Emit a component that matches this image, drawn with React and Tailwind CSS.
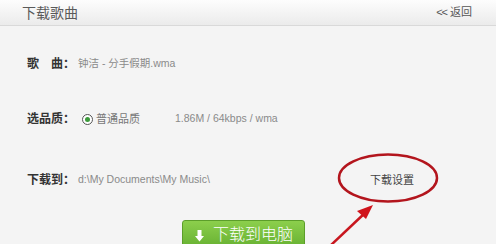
import React from "react";

export default function App() {
  return (
    <div className="relative w-[496px] h-[244px] overflow-hidden bg-[#f4f4f4] font-['Liberation_Sans','Noto_Sans_CJK_SC',sans-serif]">
      {/* Header */}
      <div className="h-[26px] flex items-center justify-between pl-[22px] pr-[24px] bg-gradient-to-b from-[#fdfdfd] to-[#ebebeb] border-b border-[#d9d9d9]">
        <span className="text-[14px] leading-none text-[#5a5a5a]">下载歌曲</span>
        <span className="text-[11px] leading-none text-[#555] flex items-center gap-[3px]">
          <span className="tracking-[-1px]">&lt;&lt;</span>
          <span>返回</span>
        </span>
      </div>

      {/* Form */}
      <div className="pl-[27px] pt-[28px] text-[10.5px]">
        <div className="h-[20px] flex items-center">
          <span className="w-[51px] font-bold text-[#333] text-[12px]">歌<span className="inline-block w-[12px]"></span>曲：</span>
          <span className="text-[#8a8a8a]">钟洁 - 分手假期.wma</span>
        </div>

        <div className="h-[20px] flex items-center mt-[35px]">
          <span className="w-[55px] font-bold text-[#333] text-[12px]">选品质：</span>
          <span className="w-[11px] h-[11px] rounded-full border border-[#555] flex items-center justify-center bg-white">
            <span className="w-[5px] h-[5px] rounded-full bg-[#3c9a3c]"></span>
          </span>
          <span className="ml-[3px] text-[11px] text-[#777]">普通品质</span>
          <span className="ml-[35px] text-[#8a8a8a]">1.86M / 64kbps / wma</span>
        </div>

        <div className="h-[20px] flex items-center mt-[41px]">
          <span className="w-[51px] font-bold text-[#333] text-[12px]">下载到：</span>
          <span className="w-[292px] text-[#8a8a8a]">d:\My Documents\My Music\</span>
          <span className="text-[11px] text-[#444]">下载设置</span>
        </div>

        <div className="mt-[30px] ml-[155px]">
          <button className="w-[123px] h-[34px] rounded-[3px] border border-[#5c9e2a] bg-gradient-to-b from-[#8ccf4c] to-[#5fab2c] text-white text-[16px] font-light flex items-start pt-[6px] pl-[12px] gap-[9px]">
            <svg width="9" height="12" viewBox="0 0 9 12" className="mt-[3px]">
              <rect x="2.5" y="0" width="4" height="6" fill="#fff" />
              <path d="M0 6 H9 L4.5 11.5 Z" fill="#fff" />
            </svg>
            <span className="leading-none">下载到电脑</span>
          </button>
        </div>
      </div>

      {/* Annotation overlay */}
      <svg className="absolute left-0 top-0 pointer-events-none" width="496" height="244">
        <ellipse cx="388" cy="178" rx="49" ry="23.5" fill="none" stroke="#b3151d" strokeWidth="2.5" />
        <line x1="330" y1="246" x2="366" y2="212" stroke="#c8161e" strokeWidth="2.5" />
        <path d="M373 205 L357 211 L366 219 Z" fill="#d0141c" />
      </svg>
    </div>
  );
}
